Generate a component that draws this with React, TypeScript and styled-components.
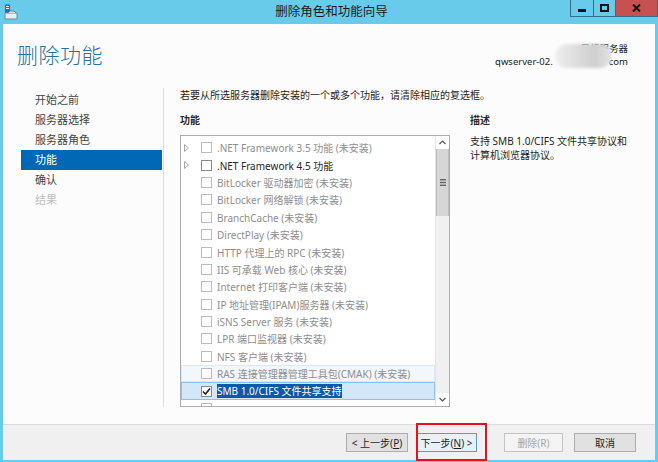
import React from 'react';
import styled, { createGlobalStyle, css } from 'styled-components';

const Global = createGlobalStyle`
  html, body { margin: 0; padding: 0; background: #fff; }
  body {
    font-family: "Noto Sans", "Noto Sans CJK SC", sans-serif;
    font-size: 10px;
    color: #1e1e1e;
  }
  * { box-sizing: border-box; }
`;

const FONT = `"Noto Sans", "Noto Sans CJK SC", sans-serif`;

const Frame = styled.div`
  width: 658px;
  height: 462px;
  background: #69cbea;
  display: flex;
  flex-direction: column;
  position: relative;
  overflow: hidden;
`;

const TitleBar = styled.div`
  height: 24px;
  display: flex;
  align-items: flex-start;
`;

const AppIcon = styled.div`
  width: 16px;
  height: 18px;
  margin: 4px 0 0 4px;
  display: flex;
`;

const Title = styled.div`
  flex: 1;
  text-align: center;
  line-height: 24px;
  font-size: 12.5px;
  color: #1a1a1a;
  padding-left: 72px;
`;

const WinButtons = styled.div`
  display: flex;
  height: 17px;
`;

const WinButton = styled.div<{ $w: number; $close?: boolean }>`
  width: ${(p) => p.$w}px;
  height: 17px;
  display: flex;
  align-items: center;
  justify-content: center;
  border: 1px solid #2f6f8d;
  border-top: none;
  margin-left: -1px;
  background: ${(p) => (p.$close ? '#c75050' : '#69cbea')};
`;

const Body = styled.div`
  flex: 1;
  margin: 0 3px 2px 3px;
  background: #fcfcfc;
  display: flex;
  flex-direction: column;
`;

const Header = styled.div`
  height: 60px;
  display: flex;
  justify-content: space-between;
  align-items: flex-start;
`;

const PageTitle = styled.div`
  margin: 18px 0 0 14px;
  font-family: ${FONT};
  font-weight: 300;
  font-size: 21px;
  line-height: 26px;
  color: #2b6f9b;
  letter-spacing: 0.5px;
`;

const ServerInfo = styled.div`
  margin: 18px 27px 0 0;
  text-align: right;
  font-size: 9.5px;
  line-height: 13px;
  color: #1a1a1a;
  position: relative;
  white-space: nowrap;
`;

const Hidden = styled.span`
  display: inline-block;
  width: 56px;
`;

const Blur = styled.div`
  position: absolute;
  right: 16px;
  top: 2px;
  width: 57px;
  height: 24px;
  border-radius: 12px;
  background: linear-gradient(90deg, #efefef, #dedede 35%, #cfcfcf 70%, #e4e4e4);
  filter: blur(1.5px);
`;

const Content = styled.div`
  flex: 1;
  display: flex;
  min-height: 0;
`;

const Nav = styled.div`
  width: 161px;
  margin: 4px 0 17px 0;
  padding: 2px 0 0 18px;
  border-right: 1px solid #dcdcdc;
  display: flex;
  flex-direction: column;
`;

const NavItem = styled.div<{ $active?: boolean; $disabled?: boolean }>`
  height: 20px;
  line-height: 20px;
  padding-left: 14px;
  margin-right: 1px;
  font-size: 11px;
  color: ${(p) => (p.$disabled ? '#c0c0c0' : '#444')};
  ${(p) =>
    p.$active &&
    css`
      background: #0068b5;
      color: #fff;
    `}
`;

const Main = styled.div`
  flex: 1;
  padding: 3px 0 0 16px;
  display: flex;
  flex-direction: column;
`;

const Intro = styled.div`
  line-height: 16px;
  font-size: 10px;
  color: #1e1e1e;
  white-space: nowrap;
`;

const Columns = styled.div`
  display: flex;
  gap: 20px;
  margin-top: 9px;
`;

const FeaturePane = styled.div`
  display: flex;
  flex-direction: column;
`;

const SectionLabel = styled.div`
  line-height: 16px;
  font-size: 10px;
  font-weight: 700;
  color: #2a2a2a;
`;

const ListBox = styled.div`
  margin-top: 7px;
  width: 270px;
  height: 272px;
  border: 1px solid #abadb3;
  background: #fff;
  display: flex;
  overflow: hidden;
`;

const Rows = styled.div`
  flex: 1;
  padding-top: 3px;
  display: flex;
  flex-direction: column;
  overflow: hidden;
`;

const Row = styled.div<{ $state?: 'hover' | 'selected' }>`
  height: 17.4px;
  flex: none;
  display: flex;
  align-items: center;
  border: 1px solid transparent;
  font-size: 10px;
  white-space: nowrap;
  ${(p) =>
    p.$state === 'hover' &&
    css`
      background: #f1f7fd;
      border-color: #dbe9f6;
    `}
  ${(p) =>
    p.$state === 'selected' &&
    css`
      background: #d3e7f8;
      border-color: #8fc0ea;
    `}
`;

const Arrow = styled.div`
  width: 19px;
  flex: none;
  display: flex;
  padding-left: 2px;
`;

const Check = styled.div<{ $dim?: boolean }>`
  width: 11px;
  height: 11px;
  flex: none;
  border: 1px solid ${(p) => (p.$dim ? '#bcbcbc' : '#8a8a8a')};
  background: #fff;
  display: flex;
  align-items: center;
  justify-content: center;
`;

const Label = styled.span<{ $dim?: boolean; $sel?: boolean }>`
  margin-left: 5px;
  color: ${(p) => (p.$dim ? '#8e8e8e' : '#262626')};
  ${(p) =>
    p.$sel &&
    css`
      background: #0a5aa8;
      color: #fff;
      line-height: 14px;
    `}
`;

const ScrollBar = styled.div`
  width: 14px;
  flex: none;
  border-left: 1px solid #e3e3e3;
  background: #f0f0f0;
  display: flex;
  flex-direction: column;
`;

const ScrollBtn = styled.div`
  height: 13px;
  background: #fff;
  display: flex;
  align-items: center;
  justify-content: center;
`;

const Thumb = styled.div`
  height: 67px;
  background: #d6d6d6;
  border-left: 1px solid #bdbdbd;
  border-right: 1px solid #bdbdbd;
  display: flex;
  align-items: center;
  justify-content: center;
`;

const Track = styled.div`
  flex: 1;
`;

const DescPane = styled.div`
  width: 164px;
  display: flex;
  flex-direction: column;
`;

const DescText = styled.div`
  margin-top: 6px;
  font-size: 10px;
  line-height: 14px;
  color: #1e1e1e;
`;

const Footer = styled.div`
  height: 36px;
  border-top: 1px solid #dadada;
  background: #f0f0f0;
  display: flex;
  justify-content: flex-end;
  align-items: flex-start;
  padding: 8px 19px 0 0;
`;

const Btn = styled.div<{ $w: number; $variant?: 'focus' | 'disabled'; $gap?: number }>`
  width: ${(p) => p.$w}px;
  height: 19px;
  margin-left: ${(p) => p.$gap ?? 0}px;
  border: 1px solid #adadad;
  background: #e1e1e1;
  display: flex;
  align-items: center;
  justify-content: center;
  font-size: 10px;
  white-space: nowrap;
  color: #1e1e1e;
  ${(p) =>
    p.$variant === 'focus' &&
    css`
      border-color: #5a9bd5;
      background: #e8f1fa;
    `}
  ${(p) =>
    p.$variant === 'disabled' &&
    css`
      border-color: #c4c4c4;
      background: #f4f4f4;
      color: #a6a6a6;
    `}
  u { text-decoration: underline; }
`;

const Annotation = styled.div`
  position: absolute;
  left: 416px;
  top: 423px;
  width: 71px;
  height: 38px;
  border: 2px solid #e8101b;
  pointer-events: none;
`;

type Item = {
  name: string;
  arrow?: boolean;
  dim?: boolean;
  state?: 'hover' | 'selected';
  checked?: boolean;
};

const items: Item[] = [
  { name: '.NET Framework 3.5 功能 (未安装)', arrow: true, dim: true },
  { name: '.NET Framework 4.5 功能', arrow: true },
  { name: 'BitLocker 驱动器加密 (未安装)', dim: true },
  { name: 'BitLocker 网络解锁 (未安装)', dim: true },
  { name: 'BranchCache (未安装)', dim: true },
  { name: 'DirectPlay (未安装)', dim: true },
  { name: 'HTTP 代理上的 RPC (未安装)', dim: true },
  { name: 'IIS 可承载 Web 核心 (未安装)', dim: true },
  { name: 'Internet 打印客户端 (未安装)', dim: true },
  { name: 'IP 地址管理(IPAM)服务器 (未安装)', dim: true },
  { name: 'iSNS Server 服务 (未安装)', dim: true },
  { name: 'LPR 端口监视器 (未安装)', dim: true },
  { name: 'NFS 客户端 (未安装)', dim: true },
  { name: 'RAS 连接管理器管理工具包(CMAK) (未安装)', dim: true, state: 'hover' },
  { name: 'SMB 1.0/CIFS 文件共享支持', state: 'selected', checked: true },
  // the next row is scrolled off; only the top of its box shows
  { name: '', dim: true },
];

const ArrowIcon = () => (
  <svg width="5" height="8" viewBox="0 0 5 8">
    <path d="M0.5 0.5 L4.5 4 L0.5 7.5 Z" fill="none" stroke="#a8a8a8" strokeWidth="1" />
  </svg>
);

const Tick = () => (
  <svg width="9" height="9" viewBox="0 0 9 9">
    <path d="M1 4.5 L3.5 7 L8 1.5" fill="none" stroke="#1e1e1e" strokeWidth="1.6" />
  </svg>
);

export default function App() {
  return (
    <>
      <Global />
      <Frame>
        <TitleBar>
          <AppIcon>
            <svg width="14" height="16" viewBox="0 0 14 16">
              <rect x="1" y="0.5" width="5" height="10" fill="#1f72c2" />
              <rect x="2" y="2" width="3" height="1" fill="#fff" />
              <rect x="2" y="4" width="3" height="1" fill="#fff" />
              <path d="M1 9 H13 V15 H1 Z" fill="#e9eef2" stroke="#6f8796" strokeWidth="1" />
              <path d="M4 9 L6 7 H10 L12 9" fill="#d7e0e6" stroke="#6f8796" strokeWidth="1" />
            </svg>
          </AppIcon>
          <Title>删除角色和功能向导</Title>
          <WinButtons>
            <WinButton $w={24}>
              <svg width="8" height="8" viewBox="0 0 8 8">
                <rect x="0" y="5" width="8" height="3" fill="#111" />
              </svg>
            </WinButton>
            <WinButton $w={23}>
              <svg width="9" height="8" viewBox="0 0 9 8">
                <rect x="1" y="1" width="7" height="6" fill="none" stroke="#111" strokeWidth="2" />
              </svg>
            </WinButton>
            <WinButton $w={43} $close>
              <svg width="9" height="8" viewBox="0 0 9 8">
                <path d="M1 0.5 L8 7.5 M8 0.5 L1 7.5" stroke="#111" strokeWidth="2" />
              </svg>
            </WinButton>
          </WinButtons>
        </TitleBar>
        <Body>
          <Header>
            <PageTitle>删除功能</PageTitle>
            <ServerInfo>
              <div>目标服务器</div>
              <div>
                qwserver-02.<Hidden />com
              </div>
              <Blur />
            </ServerInfo>
          </Header>
          <Content>
            <Nav>
              <NavItem>开始之前</NavItem>
              <NavItem>服务器选择</NavItem>
              <NavItem>服务器角色</NavItem>
              <NavItem $active>功能</NavItem>
              <NavItem>确认</NavItem>
              <NavItem $disabled>结果</NavItem>
            </Nav>
            <Main>
              <Intro>若要从所选服务器删除安装的一个或多个功能，请清除相应的复选框。</Intro>
              <Columns>
                <FeaturePane>
                  <SectionLabel>功能</SectionLabel>
                  <ListBox>
                    <Rows>
                      {items.map((it, i) => (
                        <Row key={i} $state={it.state}>
                          <Arrow>{it.arrow && <ArrowIcon />}</Arrow>
                          <Check $dim={it.dim}>{it.checked && <Tick />}</Check>
                          {it.name && (
                            <Label $dim={it.dim} $sel={it.state === 'selected'}>
                              {it.name}
                            </Label>
                          )}
                        </Row>
                      ))}
                    </Rows>
                    <ScrollBar>
                      <ScrollBtn>
                        <svg width="7" height="5" viewBox="0 0 7 5">
                          <path d="M0.5 4 L3.5 1 L6.5 4" fill="none" stroke="#555" strokeWidth="1.2" />
                        </svg>
                      </ScrollBtn>
                      <Thumb>
                        <svg width="6" height="7" viewBox="0 0 6 7">
                          <rect x="0" y="0" width="6" height="1.4" fill="#666" />
                          <rect x="0" y="2.8" width="6" height="1.4" fill="#666" />
                          <rect x="0" y="5.6" width="6" height="1.4" fill="#666" />
                        </svg>
                      </Thumb>
                      <Track />
                      <ScrollBtn>
                        <svg width="7" height="5" viewBox="0 0 7 5">
                          <path d="M0.5 1 L3.5 4 L6.5 1" fill="none" stroke="#555" strokeWidth="1.2" />
                        </svg>
                      </ScrollBtn>
                    </ScrollBar>
                  </ListBox>
                </FeaturePane>
                <DescPane>
                  <SectionLabel>描述</SectionLabel>
                  <DescText>支持 SMB 1.0/CIFS 文件共享协议和计算机浏览器协议。</DescText>
                </DescPane>
              </Columns>
            </Main>
          </Content>
          <Footer>
            <Btn $w={62}>
              &lt; 上一步(<u>P</u>)
            </Btn>
            <Btn $w={61} $gap={8} $variant="focus">
              下一步(<u>N</u>) &gt;
            </Btn>
            <Btn $w={59} $gap={27} $variant="disabled">
              删除(R)
            </Btn>
            <Btn $w={62} $gap={11}>
              取消
            </Btn>
          </Footer>
        </Body>
        <Annotation />
      </Frame>
    </>
  );
}
